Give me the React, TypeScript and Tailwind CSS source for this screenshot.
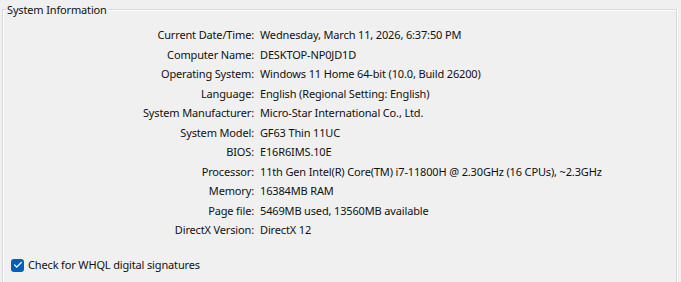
import { Check } from "lucide-react";

const ROWS: [string, string][] = [
  ["Current Date/Time:", "Wednesday, March 11, 2026, 6:37:50 PM"],
  ["Computer Name:", "DESKTOP-NP0JD1D"],
  ["Operating System:", "Windows 11 Home 64-bit (10.0, Build 26200)"],
  ["Language:", "English (Regional Setting: English)"],
  ["System Manufacturer:", "Micro-Star International Co., Ltd."],
  ["System Model:", "GF63 Thin 11UC"],
  ["BIOS:", "E16R6IMS.10E"],
  ["Processor:", "11th Gen Intel(R) Core(TM) i7-11800H @ 2.30GHz (16 CPUs), ~2.3GHz"],
  ["Memory:", "16384MB RAM"],
  ["Page file:", "5469MB used, 13560MB available"],
  ["DirectX Version:", "DirectX 12"],
];

export default function App() {
  return (
    <div
      className="w-[681px] h-[282px] overflow-hidden bg-[#f0f0f0] text-[11px] tracking-[-0.15px] text-[#111] leading-[16px]"
      style={{ fontFamily: '"Noto Sans", "Open Sans", sans-serif' }}
    >
      <div className="relative ml-[2px] mt-[9px] w-[675px] h-[300px] border-l border-t border-r border-[#d9d9d9] shadow-[inset_1px_1px_0_#ffffff,1px_0_0_#ffffff]">
        <span className="absolute -top-[8px] left-[3px] bg-[#f0f0f0] px-[1px]">System Information</span>

        <div className="grid grid-cols-[251px_1fr] gap-x-[6px] gap-y-[3.5px] pt-[17px]">
          {ROWS.map(([label, value]) => (
            <div key={label} className="contents">
              <div className="text-right">{label}</div>
              <div className="whitespace-nowrap">{value}</div>
            </div>
          ))}
        </div>

        <label className="flex items-center gap-[4px] ml-[8px] mt-[19px]">
          <span className="grid place-items-center w-[13px] h-[13px] rounded-[3px] bg-[#005fb8]">
            <Check className="w-[10px] h-[10px] text-white" strokeWidth={3} />
          </span>
          <span>Check for WHQL digital signatures</span>
        </label>
      </div>
    </div>
  );
}
